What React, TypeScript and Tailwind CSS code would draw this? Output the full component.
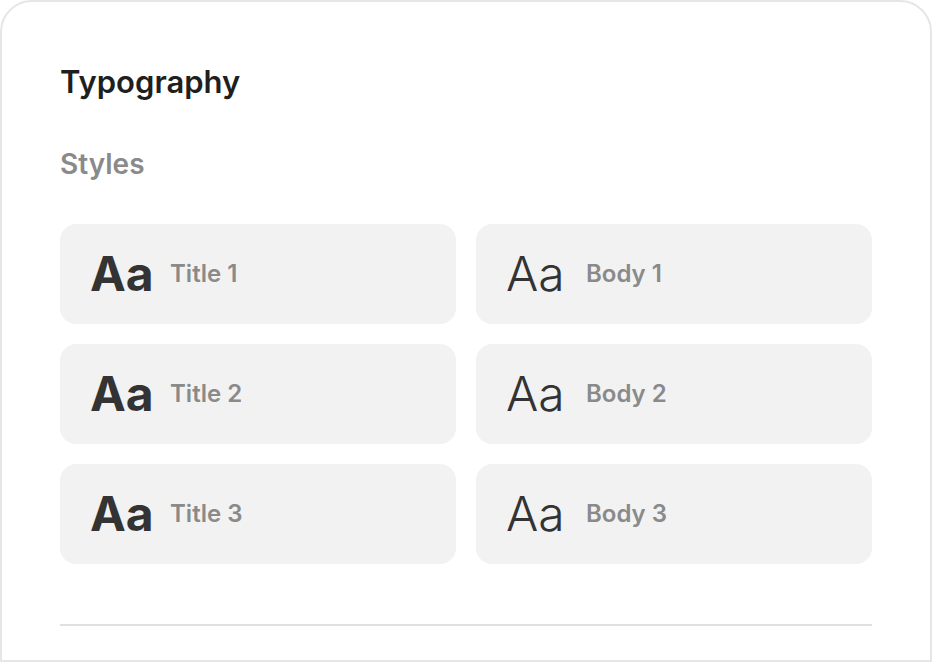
import React from 'react';

const styles = [
    { label: 'Title 1', kind: 'title' },
    { label: 'Body 1', kind: 'body' },
    { label: 'Title 2', kind: 'title' },
    { label: 'Body 2', kind: 'body' },
    { label: 'Title 3', kind: 'title' },
    { label: 'Body 3', kind: 'body' },
];

export default function App() {
    return (
        <div className="w-[932px] h-[662px] bg-white font-['Inter',sans-serif]">
            <div className="h-full border-2 border-[#e6e6e6] rounded-t-[32px] px-[58px] pt-[61px] flex flex-col">
                <h1 className="text-[31px] leading-[38px] font-semibold text-[#1f1f1f]">Typography</h1>
                <h2 className="mt-[46px] text-[28px] leading-[34px] font-semibold text-[#8a8a8a]">Styles</h2>

                {/* Style cards */}
                <div className="mt-[43px] grid grid-cols-2 gap-5">
                    {styles.map((s) => (
                        <div key={s.label} className="h-[100px] rounded-2xl bg-[#f2f2f2] flex items-center pl-[30px]">
                            <span
                                className={
                                    s.kind === 'title'
                                        ? 'w-[80px] text-[48px] leading-none font-bold text-[#333333]'
                                        : 'w-[80px] text-[48px] leading-none font-light text-[#333333]'
                                }
                            >
                                Aa
                            </span>
                            <span className="text-[24px] font-semibold text-[#8a8a8a]">{s.label}</span>
                        </div>
                    ))}
                </div>

                <div className="mt-[60px] h-[2px] bg-[#e0e0e0]" />
            </div>
        </div>
    );
}
